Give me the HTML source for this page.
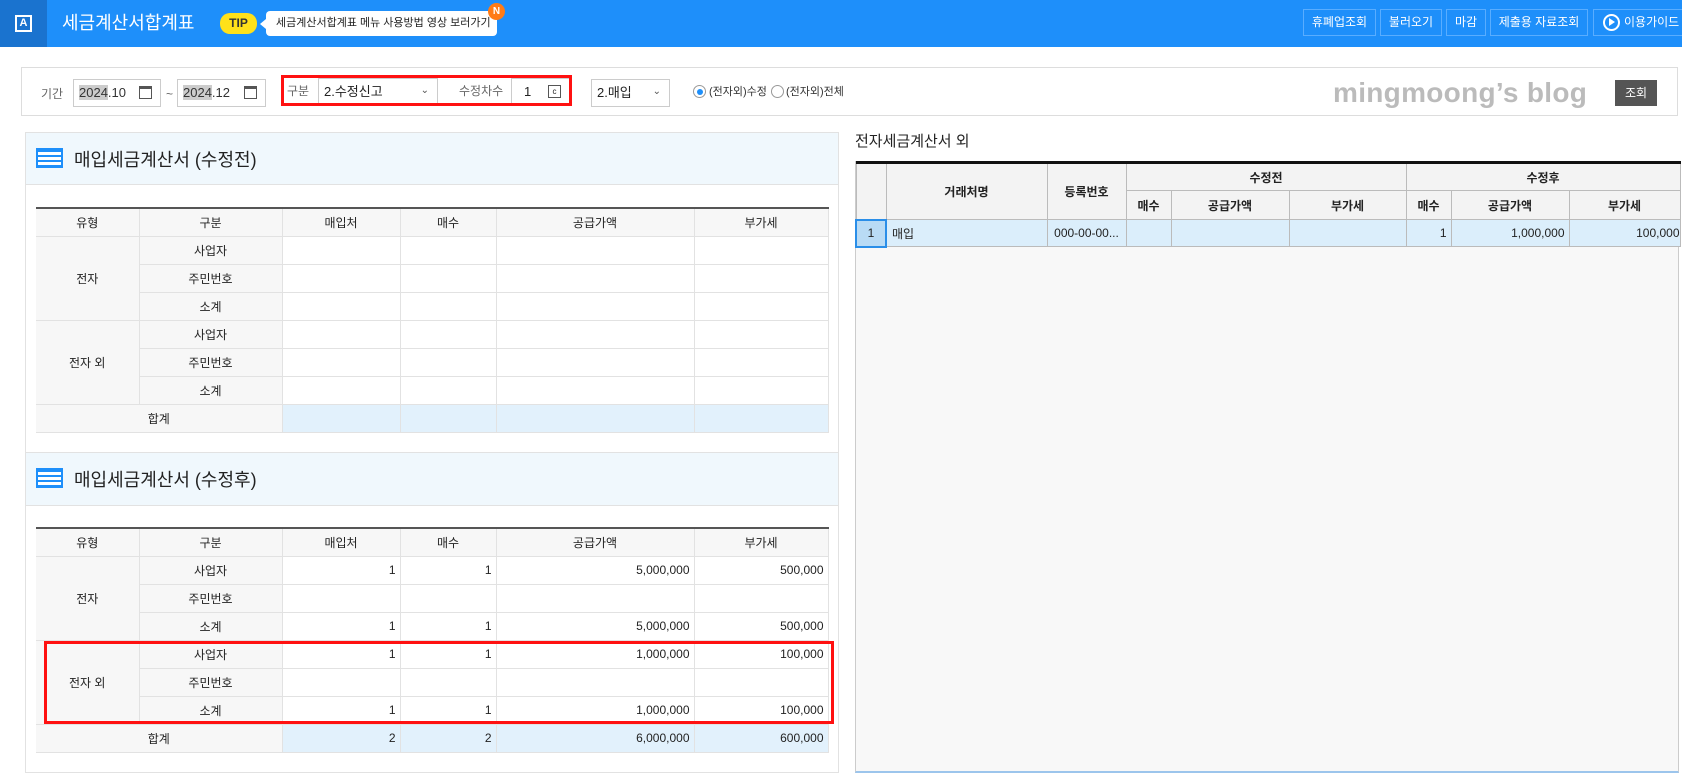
<!DOCTYPE html>
<html><head><meta charset="utf-8">
<style>
*{box-sizing:border-box;margin:0;padding:0}
body{width:1682px;height:775px;overflow:hidden;background:#fff;font-family:"Liberation Sans","Noto Sans CJK KR","NanumGothic",sans-serif;color:#333;position:relative;font-size:13px}
.abs{position:absolute}
.top{left:0;top:0;width:1682px;height:47px;background:#1e8ffa}
.logo{left:0;top:0;width:47px;height:47px;background:#1a73cf}
.logo span{position:absolute;left:15px;top:15px;width:17px;height:17px;border:2px solid #fff;color:#fff;font-size:11px;font-weight:bold;text-align:center;line-height:13px}
.ttl{left:62px;top:11px;color:#fff;font-size:18px;line-height:24px}
.tip{left:220px;top:13px;width:37px;height:21px;background:#ffe11a;border-radius:10px;font-size:12px;font-weight:bold;color:#333;text-align:center;line-height:21px}
.bub{left:266px;top:11px;width:231px;height:25px;background:#fff;border-radius:4px;font-size:11px;color:#222;line-height:25px;padding-left:10px;white-space:nowrap}
.nb{left:488px;top:3px;width:17px;height:17px;background:#ff7b16;border-radius:50%;color:#fff;font-size:10px;font-weight:bold;text-align:center;line-height:17px}
.tb{top:9px;height:27px;border:1px solid #59adff;color:#fff;font-size:12px;line-height:25px;text-align:center}
.fbox{left:21px;top:67px;width:1657px;height:49px;border:1px solid #ddd}
.lbl{font-size:12px;color:#666;line-height:16px}
.inp{height:28px;border:1px solid #ccc;background:#fff;font-size:13px;line-height:26px;padding-left:5px}
.hl{background:#ccc}
.cal{position:absolute;right:8px;top:6px;width:13px;height:13px;border:1.5px solid #555;border-top-width:3px}
.red{border:3px solid #f11}
.panel{border:1px solid #e2e2e2}
.band{background:#f0f8fd;border-bottom:1px solid #e2e2e2}
.ic{width:27px;height:20px;border:2px solid #1e8ffa;background:repeating-linear-gradient(#1e8ffa 0 2px,#fff 2px 5px)}
.stt{font-size:18px;color:#222}
table{border-collapse:collapse;table-layout:fixed;position:absolute}
.lt{left:36px;width:792px;border-top:2px solid #555}
.lt td{height:28px;border:1px solid #e2e2e2;text-align:center;font-size:12px;color:#222}
.lt td.g{background:#f7f7f7}
.lt td.n{text-align:right;padding-right:4px}
.lt td.b{background:#e2f1fc}
.lt tr>td:first-child{border-left:none}
.rt{left:855px;top:161px;width:824px;border-top:3px solid #111}
.rt td{border:1px solid #bbb;text-align:center;font-size:12px;color:#222;font-weight:bold;background:#f3f3f3}
.rt tr.d td{background:#dbeefb;font-weight:normal;height:27px}
</style></head><body>
<div class="abs top"></div>
<div class="abs logo"><span>A</span></div>
<div class="abs ttl">세금계산서합계표</div>
<div class="abs tip">TIP</div>
<div class="abs" style="left:260px;top:19px;width:0;height:0;border-top:5px solid transparent;border-bottom:5px solid transparent;border-right:6px solid #fff"></div>
<div class="abs bub">세금계산서합계표 메뉴 사용방법 영상 보러가기</div>
<div class="abs nb">N</div>
<div class="abs tb" style="left:1303px;width:73px">휴폐업조회</div>
<div class="abs tb" style="left:1380px;width:62px">불러오기</div>
<div class="abs tb" style="left:1446px;width:40px">마감</div>
<div class="abs tb" style="left:1490px;width:98px">제출용 자료조회</div>
<div class="abs tb" style="left:1593px;width:95px;text-align:left;padding-left:30px">이용가이드</div>
<div class="abs" style="left:1603px;top:14px;width:17px;height:17px;border:2px solid #fff;border-radius:50%"></div>
<div class="abs" style="left:1609px;top:18px;border-top:4.5px solid transparent;border-bottom:4.5px solid transparent;border-left:6px solid #fff"></div>

<div class="abs fbox"></div>
<div class="abs lbl" style="left:41px;top:86px">기간</div>
<div class="abs inp" style="left:73px;top:79px;width:88px"><span class="hl">2024</span>.10<span class="cal"></span></div>
<div class="abs lbl" style="left:166px;top:86px">~</div>
<div class="abs inp" style="left:177px;top:79px;width:89px"><span class="hl">2024</span>.12<span class="cal"></span></div>
<div class="abs lbl" style="left:287px;top:83px">구분</div>
<div class="abs inp" style="left:318px;top:78px;width:120px;color:#222">2.수정신고<span style="position:absolute;right:8px;top:-1px;font-size:10px;color:#555">&#8964;</span></div>
<div class="abs lbl" style="left:459px;top:83px">수정차수</div>
<div class="abs inp" style="left:511px;top:78px;width:58px;border-right:none;padding-left:12px;color:#222">1<span style="position:absolute;right:8px;top:6px;width:13px;height:13px;border:1px solid #555;font-size:8px;line-height:11px;text-align:center">c</span></div>
<div class="abs red" style="left:281px;top:75px;width:291px;height:31px"></div>
<div class="abs inp" style="left:591px;top:79px;width:79px;color:#222">2.매입<span style="position:absolute;right:8px;top:-1px;font-size:10px;color:#555">&#8964;</span></div>
<div class="abs" style="left:693px;top:85px;width:13px;height:13px;border:1px solid #999;border-radius:50%"><div style="margin:2.5px;width:6px;height:6px;border-radius:50%;background:#1e8ffa"></div></div>
<div class="abs lbl" style="left:709px;top:84px;color:#333;font-size:11px">(전자외)수정</div>
<div class="abs" style="left:771px;top:85px;width:13px;height:13px;border:1px solid #999;border-radius:50%"></div>
<div class="abs lbl" style="left:786px;top:84px;color:#333;font-size:11px">(전자외)전체</div>
<div class="abs" style="left:1333px;top:77px;font-size:28px;font-weight:bold;color:#bbb;letter-spacing:0.3px">mingmoong’s blog</div>
<div class="abs" style="left:1615px;top:80px;width:42px;height:26px;background:#555;color:#fff;font-size:12px;text-align:center;line-height:26px">조회</div>

<div class="abs panel" style="left:25px;top:132px;width:814px;height:641px"></div>
<div class="abs band" style="left:26px;top:133px;width:812px;height:52px"></div>
<div class="abs ic" style="left:36px;top:148px"></div>
<div class="abs stt" style="left:74px;top:146px">매입세금계산서 (수정전)</div>
<table class="lt" style="top:207px">
<colgroup><col style="width:103px"><col style="width:143px"><col style="width:118px"><col style="width:96px"><col style="width:198px"><col style="width:134px"></colgroup>
<tr><td class="g">유형</td><td class="g">구분</td><td class="g">매입처</td><td class="g">매수</td><td class="g">공급가액</td><td class="g">부가세</td></tr>
<tr><td class="g" rowspan="3">전자</td><td class="g">사업자</td><td></td><td></td><td></td><td></td></tr>
<tr><td class="g">주민번호</td><td></td><td></td><td></td><td></td></tr>
<tr><td class="g">소계</td><td></td><td></td><td></td><td></td></tr>
<tr><td class="g" rowspan="3">전자 외</td><td class="g">사업자</td><td></td><td></td><td></td><td></td></tr>
<tr><td class="g">주민번호</td><td></td><td></td><td></td><td></td></tr>
<tr><td class="g">소계</td><td></td><td></td><td></td><td></td></tr>
<tr><td class="g" colspan="2">합계</td><td class="b"></td><td class="b"></td><td class="b"></td><td class="b"></td></tr>
</table>
<div class="abs band" style="left:26px;top:452px;width:812px;height:54px;border-top:1px solid #e2e2e2"></div>
<div class="abs ic" style="left:36px;top:468px"></div>
<div class="abs stt" style="left:74px;top:466px">매입세금계산서 (수정후)</div>
<table class="lt" style="top:527px">
<colgroup><col style="width:103px"><col style="width:143px"><col style="width:118px"><col style="width:96px"><col style="width:198px"><col style="width:134px"></colgroup>
<tr><td class="g">유형</td><td class="g">구분</td><td class="g">매입처</td><td class="g">매수</td><td class="g">공급가액</td><td class="g">부가세</td></tr>
<tr><td class="g" rowspan="3">전자</td><td class="g">사업자</td><td class="n">1</td><td class="n">1</td><td class="n">5,000,000</td><td class="n">500,000</td></tr>
<tr><td class="g">주민번호</td><td></td><td></td><td></td><td></td></tr>
<tr><td class="g">소계</td><td class="n">1</td><td class="n">1</td><td class="n">5,000,000</td><td class="n">500,000</td></tr>
<tr><td class="g" rowspan="3">전자 외</td><td class="g">사업자</td><td class="n">1</td><td class="n">1</td><td class="n">1,000,000</td><td class="n">100,000</td></tr>
<tr><td class="g">주민번호</td><td></td><td></td><td></td><td></td></tr>
<tr><td class="g">소계</td><td class="n">1</td><td class="n">1</td><td class="n">1,000,000</td><td class="n">100,000</td></tr>
<tr><td class="g" colspan="2">합계</td><td class="b n">2</td><td class="b n">2</td><td class="b n">6,000,000</td><td class="b n">600,000</td></tr>
</table>
<div class="abs red" style="left:44px;top:641px;width:790px;height:83px"></div>

<div class="abs" style="left:855px;top:130px;font-size:15px;color:#222">전자세금계산서 외</div>
<div class="abs" style="left:855px;top:161px;width:824px;height:612px;background:#f8f8f8;border:1px solid #ccc;border-bottom:2px solid #9cc5ec"></div>
<table class="rt">
<colgroup><col style="width:30px"><col style="width:161px"><col style="width:79px"><col style="width:45px"><col style="width:118px"><col style="width:117px"><col style="width:45px"><col style="width:118px"><col style="width:111px"></colgroup>
<tr style="height:28px"><td rowspan="2"></td><td rowspan="2">거래처명</td><td rowspan="2">등록번호</td><td colspan="3">수정전</td><td colspan="3">수정후</td></tr>
<tr style="height:29px"><td>매수</td><td>공급가액</td><td>부가세</td><td>매수</td><td>공급가액</td><td>부가세</td></tr>
<tr class="d"><td style="background:#b9dbf5;border:2px solid #2a8ee8">1</td><td style="text-align:left;padding-left:5px">매입</td><td>000-00-00...</td><td></td><td></td><td></td><td style="text-align:right;padding-right:4px">1</td><td style="text-align:right;padding-right:4px">1,000,000</td><td style="text-align:right;padding-right:0">100,000</td></tr>
</table>
</body></html>
